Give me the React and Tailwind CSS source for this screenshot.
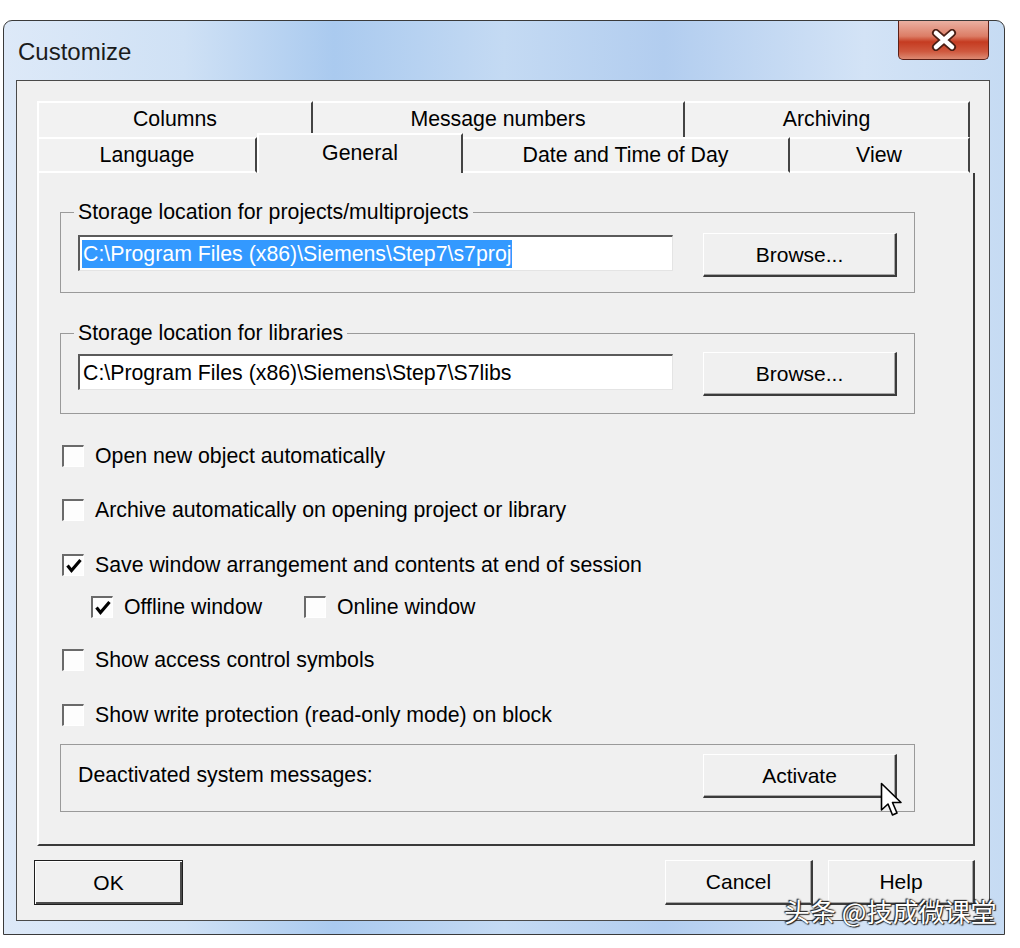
import React from 'react';

const ROW1 = [
  { label: 'Columns', w: 'w-[276px]' },
  { label: 'Message numbers', w: 'w-[372px]' },
  { label: 'Archiving', w: 'w-[285px]' },
];

const ROW2 = [
  { label: 'Language', w: 'w-[220px]' },
  { label: 'General', w: 'w-[206px]', active: true },
  { label: 'Date and Time of Day', w: 'w-[327px]' },
  { label: 'View', w: 'w-[180px]' },
];

function CheckBox({ checked }) {
  return (
    <span className="flex h-[22px] w-[22px] shrink-0 items-center justify-center border-t-2 border-l-2 border-t-[#6a6a6a] border-l-[#6a6a6a] border-r border-b border-r-white border-b-white bg-[#fdfdfd]">
      {checked && (
        <svg width="18" height="18" viewBox="0 0 18 18">
          <path d="M2.5 8.5 L6.5 13.5 L15.5 3" fill="none" stroke="#000" strokeWidth="3.2" />
        </svg>
      )}
    </span>
  );
}

function Check({ label, checked, className = '' }) {
  return (
    <div className={`flex h-[24px] items-center gap-[11px] ${className}`}>
      <CheckBox checked={checked} />
      <span className="leading-[24px]">{label}</span>
    </div>
  );
}

function Button({ children, className = '' }) {
  return (
    <button
      className={`flex items-center justify-center border-t border-l border-t-white border-l-white border-r-2 border-b-2 border-r-[#3b3b3b] border-b-[#3b3b3b] bg-[#f0f0f0] text-[21px] text-black shadow-[inset_-1px_-1px_0_#a8a8a8] ${className}`}
    >
      {children}
    </button>
  );
}

function Field({ children }) {
  return (
    <div className="mt-[2px] flex h-[36px] w-[595px] items-center overflow-hidden border-t-2 border-l-2 border-t-[#5a5a5a] border-l-[#5a5a5a] border-r border-b border-r-[#e4e4e4] border-b-[#e4e4e4] bg-white pl-[2px] text-[21.3px]">
      {children}
    </div>
  );
}

export default function App() {
  return (
    <div className="min-h-screen bg-white pt-[20px] pl-[3px] font-['Liberation_Sans',Arial,sans-serif] text-black">
      <div className="relative flex h-[915px] w-[1002px] flex-col rounded-t-[9px] border border-[#3a3a3a] bg-[linear-gradient(90deg,#dde9f8_0%,#cfe1f5_18%,#aacaef_33%,#c4daf3_50%,#b2cdef_66%,#d3e3f6_86%,#c6dbf3_100%)]">
        {/* Title bar */}
        <div className="flex h-[59px] items-start justify-between">
          <span className="pl-[14px] pt-[17px] text-[24px] leading-[28px] text-[#1b1b1b]">Customize</span>
          <div className="mr-[15px] flex h-[39px] w-[91px] items-center justify-center rounded-b-[5px] border border-t-0 border-[#5b2017] bg-[linear-gradient(180deg,#eab0a2_0%,#dc7d66_40%,#c53b21_55%,#cf583e_80%,#dd8a72_100%)]">
            <svg width="28" height="22" viewBox="0 0 28 22">
              <path d="M6 4 L22 18 M22 4 L6 18" stroke="#4a1e14" strokeWidth="8" strokeLinecap="round" />
              <path d="M6 4 L22 18 M22 4 L6 18" stroke="#ffffff" strokeWidth="4.5" strokeLinecap="round" />
            </svg>
          </div>
        </div>

        {/* Client area */}
        <div className="ml-[12px] mr-[14px] flex h-[841px] flex-col border border-[#4a4a4a] bg-[#f0f0f0]">
          <div className="ml-[20px] mt-[20px] flex w-[938px] flex-col">
            {/* Tab row 1 */}
            <div className="flex h-[36px]">
              {ROW1.map((t, i) => (
                <div
                  key={t.label}
                  className={`flex h-[36px] items-center justify-center border-t-2 border-t-white border-r-2 border-r-[#444] bg-[#f2f2f2] text-[21.3px] ${i === 0 ? 'border-l-2 border-l-white' : ''} ${t.w}`}
                >
                  {t.label}
                </div>
              ))}
            </div>
            {/* Tab row 2 */}
            <div className="flex h-[36px] items-end">
              {ROW2.map((t, i) =>
                t.active ? (
                  <div
                    key={t.label}
                    className={`relative z-10 flex h-[40px] items-start justify-center border-t-2 border-l-2 border-t-white border-l-white border-r-2 border-r-[#444] bg-[#f0f0f0] pt-[3px] text-[21.3px] ${t.w}`}
                  >
                    {t.label}
                  </div>
                ) : (
                  <div
                    key={t.label}
                    className={`flex h-[36px] items-center justify-center border-t-2 border-t-white border-r-2 border-r-[#444] border-b-2 border-b-white bg-[#f2f2f2] pt-[2px] text-[21.3px] ${i === 0 ? 'border-l-2 border-l-white' : ''} ${t.w}`}
                  >
                    {t.label}
                  </div>
                )
              )}
            </div>

            {/* Tab page */}
            <div className="flex h-[673px] w-[938px] flex-col border-l-2 border-l-white border-r-2 border-r-[#3a3a3a] border-b-2 border-b-[#3a3a3a] pl-[21px] pt-[27px] text-[21.3px]">
              <fieldset className="w-[855px] border border-[#9a9a9a] pl-[17px] pt-[9px] pb-[15px]">
                <legend className="-ml-[4px] px-[4px] leading-[24px]">Storage location for projects/multiprojects</legend>
                <div className="flex items-start gap-[30px]">
                  <Field>
                    <span className="bg-[#3399ff] pl-[1px] pr-[1px] leading-[28px] text-white">C:\Program Files (x86)\Siemens\Step7\s7proj</span>
                  </Field>
                  <Button className="h-[44px] w-[194px]">Browse...</Button>
                </div>
              </fieldset>

              <fieldset className="mt-[28px] w-[855px] border border-[#9a9a9a] pl-[17px] pt-[7px] pb-[17px]">
                <legend className="-ml-[4px] px-[4px] leading-[24px]">Storage location for libraries</legend>
                <div className="flex items-start gap-[30px]">
                  <Field>
                    <span className="pl-[1px] leading-[28px]">C:\Program Files (x86)\Siemens\Step7\S7libs</span>
                  </Field>
                  <Button className="h-[44px] w-[194px]">Browse...</Button>
                </div>
              </fieldset>

              <Check className="ml-[2px] mt-[30px]" label="Open new object automatically" />
              <Check className="ml-[2px] mt-[30px]" label="Archive automatically on opening project or library" />
              <Check className="ml-[2px] mt-[31px]" label="Save window arrangement and contents at end of session" checked />
              <div className="ml-[31px] mt-[18px] flex h-[24px] items-center">
                <Check className="w-[213px]" label="Offline window" checked />
                <Check label="Online window" />
              </div>
              <Check className="ml-[2px] mt-[29px]" label="Show access control symbols" />
              <Check className="ml-[2px] mt-[31px]" label="Show write protection (read-only mode) on block" />

              <div className="mt-[17px] flex h-[68px] w-[855px] items-start justify-between border border-[#9a9a9a] pl-[17px] pr-[17px] pt-[9px]">
                <span className="mt-[9px] leading-[24px]">Deactivated system messages:</span>
                <div className="relative">
                  <Button className="h-[44px] w-[194px]">Activate</Button>
                  <svg className="absolute left-[177px] top-[28px]" width="27" height="37" viewBox="0 0 27 37">
                    <path d="M1.5 1.5 L1.5 28 L8 22 L12.5 33 L17 31 L12.5 20.5 L21 20.5 Z" fill="#ffffff" stroke="#000" strokeWidth="1.6" strokeLinejoin="round" />
                  </svg>
                </div>
              </div>
            </div>
          </div>

          {/* Dialog buttons */}
          <div className="mt-[14px] flex items-start pl-[17px] pr-[14px]">
            <button className="flex h-[45px] w-[149px] items-center justify-center border border-[#1e1e1e] bg-[#f0f0f0] text-[21px] shadow-[inset_1px_1px_0_#fff,inset_-2px_-2px_0_#4a4a4a]">
              OK
            </button>
            <div className="ml-auto flex gap-[15px]">
              <Button className="h-[45px] w-[148px]">Cancel</Button>
              <Button className="h-[45px] w-[147px]">Help</Button>
            </div>
          </div>
        </div>

        {/* Watermark */}
        <span className="absolute left-[780px] top-[874px] font-['Noto_Sans_CJK_SC',sans-serif] text-[26px] leading-[32px] text-white [text-shadow:0_0_2px_#222,1px_1px_1px_#222,-1px_-1px_1px_#222]">
          头条 @技成微课堂
        </span>
      </div>
    </div>
  );
}
